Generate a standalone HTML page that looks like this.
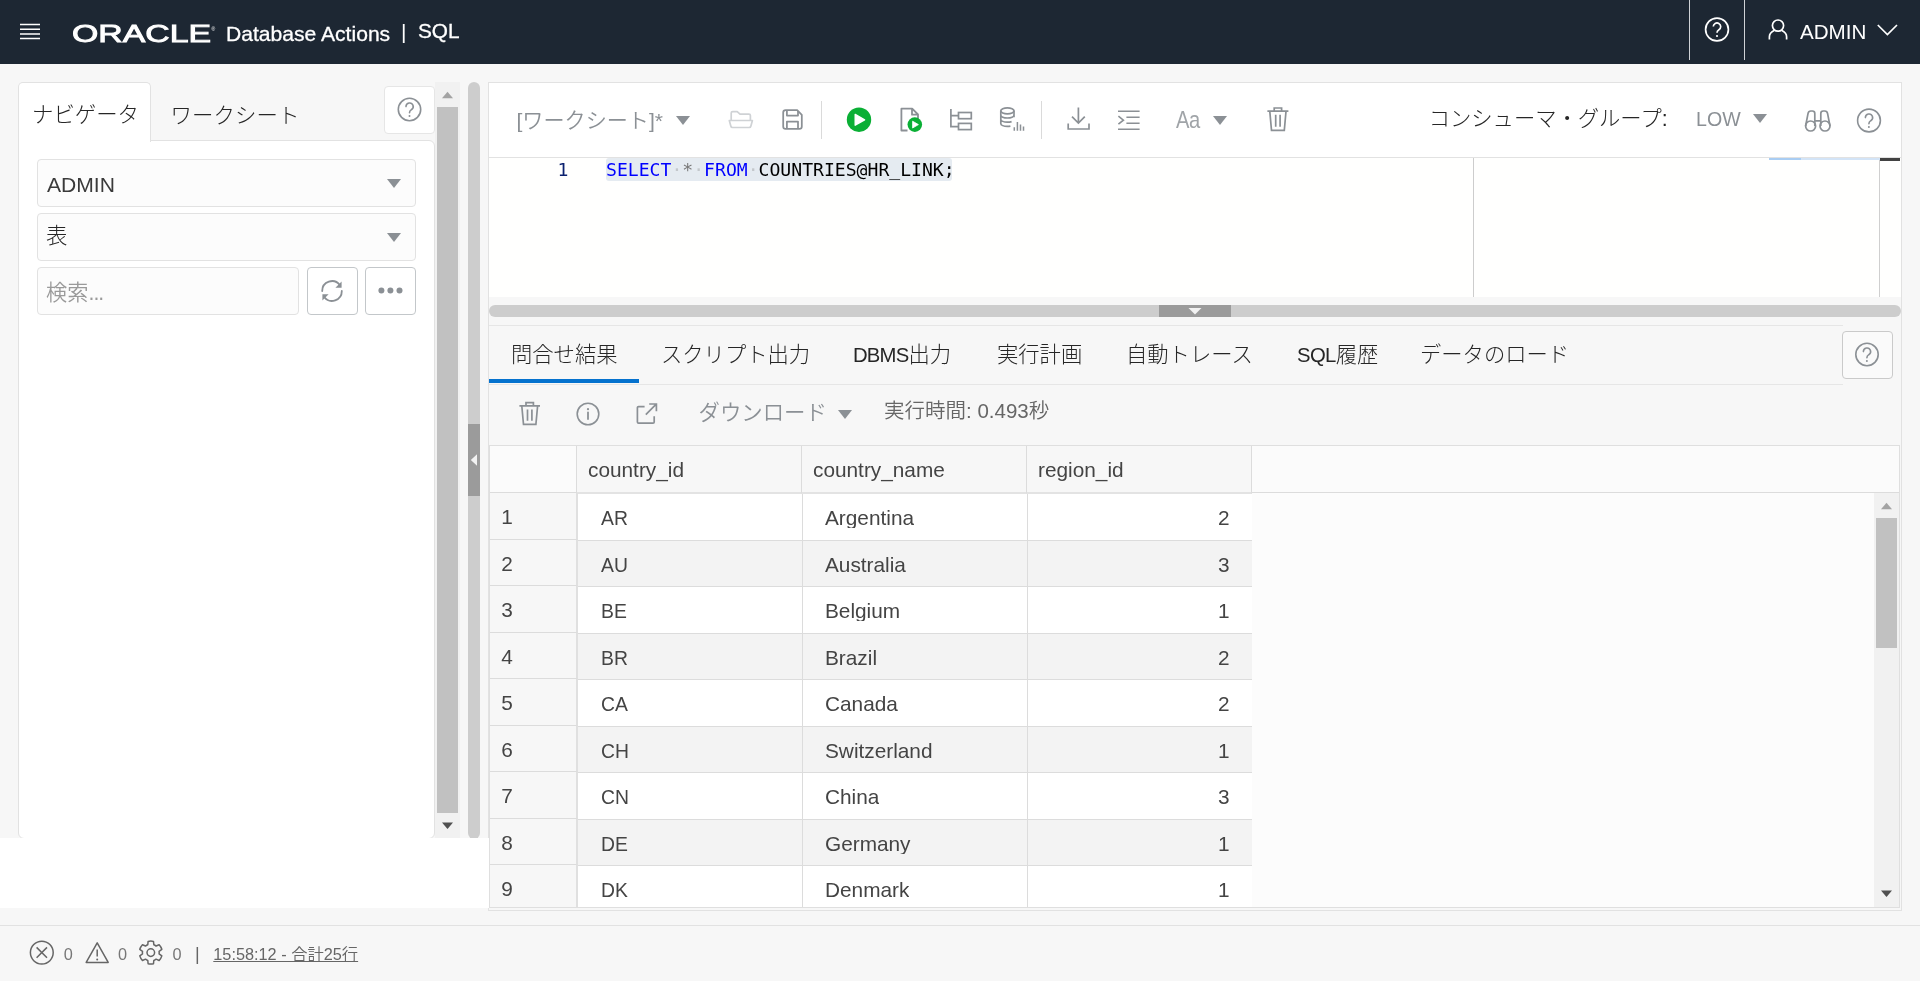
<!DOCTYPE html>
<html lang="ja">
<head>
<meta charset="utf-8">
<title>SQL | Oracle Database Actions</title>
<style>
*{box-sizing:border-box;margin:0;padding:0}
html,body{width:1920px;height:981px;overflow:hidden;background:#f7f7f7}
body{position:relative;will-change:transform;font-family:"Liberation Sans","Noto Sans CJK JP",sans-serif;font-size:20.8px;color:#3a3a3a}
.abs{position:absolute}
svg{position:absolute;overflow:visible}
.ic{fill:none;stroke:#8b9095;stroke-width:1.6;stroke-linecap:round;stroke-linejoin:round}
.t{position:absolute;white-space:nowrap;line-height:1}
.jp{font-weight:350}
.g{color:#8b9095}
.jd{font-weight:300;color:#262626}
#hdr{left:0;top:0;width:1920px;height:64px;background:#1d2733}
#hdr .t{color:#fff}
#navtab{left:18px;top:82px;width:133px;height:60px;background:#fff;border:1px solid #e2e2e2;border-bottom:none;border-radius:5px 5px 0 0}
#navbox{left:18px;top:140px;width:417px;height:699px;background:#fff;border:1px solid #e2e2e2;border-radius:0 6px 6px 6px}
#navcover{left:19px;top:139px;width:131px;height:3px;background:#fff}
.hbtn{background:#fff;border:1px solid #e6e6e6;border-radius:4px}
.inp{background:#fcfcfc;border:1px solid #e2e2e2;border-radius:4px;height:48px}
.btn{background:#fff;border:1px solid #c3c7ca;border-radius:4px;height:48px}
.tri{width:0;height:0;border-left:7px solid transparent;border-right:7px solid transparent;border-top:9px solid #8b9095}
#rp{left:488px;top:82px;width:1414px;height:829px;border:1px solid #e2e2e2;background:#f7f7f7}
#tb{left:489px;top:83px;width:1412px;height:75px;background:#fff;border-bottom:1px solid #e2e2e2}
#ed{left:489px;top:158px;width:1412px;height:139px;background:#fffffe}
.mono{font-family:"DejaVu Sans Mono","Liberation Mono",monospace;font-size:18.1px}
.kw{color:#0000ff}
.ws{color:#c3c7cb}
#grid{left:489px;top:445px;width:1411px;height:463px;border:1px solid #dfdfdf;background:#fcfcfc;overflow:hidden}
.cell{position:absolute;overflow:hidden;white-space:nowrap;line-height:1}
.hc{background:#f7f7f7;border-right:1px solid #dcdcdc;border-bottom:2px solid #e3e3e3;height:48px;top:0}
.rh{background:#f7f7f7;border-right:2px solid #e0e0e0;border-bottom:1px solid #dcdcdc;left:0;width:88px}
.dc{border-right:1px solid #dcdcdc;border-bottom:1px solid #dcdcdc}
.clip{position:absolute;white-space:nowrap;line-height:20px;height:20px;overflow:hidden;color:#444}
</style>
</head>
<body>
<!-- HEADER -->
<div id="hdr" class="abs">
  <svg style="left:20px;top:23px" width="20" height="18" viewBox="0 0 20 18"><path d="M0 1.5h20M0 6.2h20M0 10.9h20M0 15.6h20" stroke="#fff" stroke-width="1.5" fill="none"/></svg>
  <svg style="left:71px;top:23px" width="146" height="22" viewBox="0 0 146 22"><text x="1" y="19.2" fill="#fff" font-family="Liberation Sans, sans-serif" font-size="24.2" textLength="139" lengthAdjust="spacingAndGlyphs" stroke="#fff" stroke-width="0.9">ORACLE</text><text x="140.5" y="8" fill="#fff" font-family="Liberation Sans, sans-serif" font-size="5">®</text></svg>
  <div class="t" style="left:226px;top:23px;font-size:21.1px;-webkit-text-stroke:0.3px #fff">Database Actions</div>
  <div class="t" style="left:401px;top:20.5px;font-size:21px">|</div>
  <div class="t" style="left:418px;top:20.5px;font-size:20.8px;-webkit-text-stroke:0.3px #fff">SQL</div>
  <div class="abs" style="left:1689px;top:0;width:1px;height:60px;background:#cfd2d6"></div>
  <div class="abs" style="left:1744px;top:0;width:1px;height:60px;background:#cfd2d6"></div>
  <svg style="left:1704px;top:17px" width="26" height="26" viewBox="0 0 26 26"><circle cx="13" cy="12.5" r="11.4" fill="none" stroke="#fff" stroke-width="1.7"/><path d="M9.3 9.6a3.7 3.7 0 1 1 5.6 3.2c-1.2.8-1.9 1.4-1.9 3" fill="none" stroke="#fff" stroke-width="1.7"/><circle cx="13" cy="19" r="1.1" fill="#fff"/></svg>
  <svg style="left:1768px;top:19px" width="21" height="22" viewBox="0 0 21 22"><circle cx="10" cy="6.6" r="5.6" fill="none" stroke="#fff" stroke-width="1.7"/><path d="M6.5 11.2C3.5 12.6 1.4 14.6 1.4 17.800V20.6M13.5 11.2C16.5 12.6 18.6 14.6 18.6 17.8V20.6" fill="none" stroke="#fff" stroke-width="1.7"/></svg>
  <div class="t" style="left:1800px;top:21.5px;font-size:20.6px">ADMIN</div>
  <svg style="left:1877px;top:24px" width="21" height="12" viewBox="0 0 21 12"><path d="M0.8 1l9.6 9.6L20 1" fill="none" stroke="#fff" stroke-width="1.7"/></svg>
</div>
<!-- LEFT -->
<div class="abs" style="left:0;top:838px;width:488px;height:70px;background:#fff"></div>
<div id="navbox" class="abs"></div>
<div id="navtab" class="abs"></div>
<div id="navcover" class="abs"></div>
<div class="t jd" style="left:32px;top:105px;font-size:21.4px">ナビゲータ</div>
<div class="t jd" style="left:170.5px;top:106.3px;font-size:21.4px;letter-spacing:0.1px">ワークシート</div>
<div class="abs hbtn" style="left:384px;top:86px;width:51px;height:48px"></div>
<svg style="left:397px;top:97px" width="26" height="26" viewBox="0 0 26 26"><circle cx="12.5" cy="12.5" r="11.2" class="ic"/><path d="M9 9.6a3.6 3.6 0 1 1 5.4 3.1c-1.2.8-1.9 1.4-1.9 3" class="ic"/><circle cx="12.5" cy="19" r="1" fill="#8b9095"/></svg>
<div class="abs inp" style="left:37px;top:159px;width:379px"></div>
<div class="t" style="left:47px;top:174px;font-size:21.1px;color:#3a3a3a">ADMIN</div>
<div class="abs tri" style="left:387px;top:179px"></div>
<div class="abs inp" style="left:37px;top:213px;width:379px"></div>
<div class="t jd" style="left:46px;top:226.3px;font-size:21.4px">表</div>
<div class="abs tri" style="left:387px;top:233px"></div>
<div class="abs inp" style="left:37px;top:267px;width:262px"></div>
<div class="t jp" style="left:46px;top:282.3px;font-size:21.2px;color:#9a9a9a">検索<span style="letter-spacing:-0.9px">...</span></div>
<div class="abs btn" style="left:307px;top:267px;width:51px"></div>
<svg style="left:320px;top:279px" width="24" height="24" viewBox="0 0 24 24"><path d="M2.2 12a9.8 9.8 0 0 1 17.6-6M21.8 12a9.8 9.8 0 0 1-17.6 6" class="ic" style="stroke-width:1.8"/><path d="M21.6 2.6v6.2h-6.2zM2.4 21.4v-6.2h6.2z" fill="#8b9095"/></svg>
<div class="abs btn" style="left:365px;top:267px;width:51px"></div>
<svg style="left:378px;top:287px" width="25" height="7" viewBox="0 0 25 7"><circle cx="3.4" cy="3.4" r="3" fill="#8b9095"/><circle cx="12.4" cy="3.4" r="3" fill="#8b9095"/><circle cx="21.5" cy="3.4" r="3" fill="#8b9095"/></svg>
<!-- nav scrollbar -->
<div class="abs" style="left:435px;top:82px;width:25px;height:756px;background:#f1f1f1"></div>
<div class="abs" style="left:437px;top:107px;width:21px;height:706px;background:#c1c1c1"></div>
<svg style="left:442px;top:91px" width="11" height="8" viewBox="0 0 11 8"><path d="M0 7.2L5.5 0.8 11 7.2z" fill="#a3a3a3"/></svg>
<svg style="left:442px;top:822px" width="11" height="8" viewBox="0 0 11 8"><path d="M0 0.5L5.5 6.9 11 0.5z" fill="#505050"/></svg>
<!-- splitter -->
<div class="abs" style="left:468px;top:82px;width:12px;height:757px;background:#cdcdcd;border-radius:6px"></div>
<div class="abs" style="left:468px;top:424px;width:12px;height:72px;background:#9b9b9b"></div>
<svg style="left:470px;top:454px" width="8" height="12" viewBox="0 0 8 12"><path d="M7 0.3v11.4L0.8 6z" fill="#f2f2f2"/></svg>
<!-- RIGHT PANEL -->
<div id="rp" class="abs"></div>
<div id="tb" class="abs"></div>
<div class="t jp g" style="left:516.5px;top:109.5px;font-size:21.1px">[ワークシート]*</div>
<div class="abs tri" style="left:676px;top:116px"></div>
<!-- open (disabled) -->
<svg style="left:728px;top:109px" width="26" height="21" viewBox="0 0 26 21"><path d="M3.2 11.5V4.1c0-.9.6-1.5 1.5-1.500H9.2L12 5.100H20.900c.9 0 1.500.6 1.500 1.500V11.500M1.300 11.500H24.400L22.900 17c-.2 1-.8 1.500-1.700 1.500H4.500c-.9 0-1.500-.5-1.700-1.500z" fill="none" stroke="#cfd2d5" stroke-width="1.700" stroke-linejoin="round"/></svg>
<!-- save -->
<svg style="left:781px;top:109px" width="23" height="22" viewBox="0 0 23 22"><path d="M4.600 1.200H16.200L20.800 5.800V17.500c0 1.400-1 2.400-2.400 2.400H4.600c-1.400 0-2.400-1-2.400-2.400V3.600c0-1.400 1-2.400 2.400-2.400z" class="ic" style="stroke-width:1.750"/><path d="M5.900 1.200V6.500H17V1.900M5.900 19.900V12.500H17V19.900" class="ic" style="stroke-width:1.750;stroke-linecap:butt"/></svg>
<div class="abs" style="left:821px;top:101px;width:1px;height:38px;background:#dadada"></div>
<!-- run -->
<svg style="left:846px;top:107px" width="26" height="26" viewBox="0 0 26 26"><circle cx="13" cy="12.700" r="12.200" fill="#0aaf35"/><path d="M9.200 7.400v10.800l9.400-5.400z" fill="#fff" stroke="#fff" stroke-width="1.400" stroke-linejoin="round"/></svg>
<!-- run script -->
<svg style="left:900px;top:107px" width="24" height="26" viewBox="0 0 24 26"><path d="M7.500 23.500H1.400V1.700h10.800l5.800 5.800v4.500M12 1.900v5.800h5.800" fill="none" stroke="#8b9095" stroke-width="1.800" stroke-linejoin="round"/><circle cx="14.800" cy="17.600" r="7.300" fill="#0aaf35"/><path d="M12.600 14.200v6.800l5.800-3.400z" fill="#fff" stroke="#fff" stroke-width=".8" stroke-linejoin="round"/></svg>
<!-- explain plan -->
<svg style="left:949px;top:108px" width="24" height="23" viewBox="0 0 24 23"><path d="M1.900 1v17.600h7.600M1.900 7.600h7.600" fill="none" stroke="#8b9095" stroke-width="1.700"/><rect x="9.500" y="4.500" width="12.800" height="6.200" fill="none" stroke="#8b9095" stroke-width="1.700"/><rect x="9.500" y="15.400" width="12.800" height="6.200" fill="none" stroke="#8b9095" stroke-width="1.700"/></svg>
<!-- autotrace -->
<svg style="left:999px;top:106px" width="27" height="26" viewBox="0 0 27 26"><ellipse cx="8.4" cy="4.8" rx="6.600" ry="3" fill="none" stroke="#8b9095" stroke-width="1.700"/><path d="M1.800 4.800v12.600c0 1.700 3 3 6.600 3 1.100 0 2.100-.1 3-.3M15 4.800v6.400M1.800 9c0 1.700 3 3 6.600 3s6.600-1.300 6.600-3M1.800 13.200c0 1.700 3 3 6.600 3 1.600 0 3-.2 4.200-.6" fill="none" stroke="#8b9095" stroke-width="1.700"/><path d="M15.300 24.800v-3.600M18.400 24.800v-8.800M21.500 24.800v-6.200M24.500 24.800v-4.400" stroke="#8b9095" stroke-width="1.500" fill="none"/></svg>
<div class="abs" style="left:1041px;top:101px;width:1px;height:38px;background:#dadada"></div>
<!-- download -->
<svg style="left:1066px;top:106px" width="26" height="25" viewBox="0 0 26 25"><path d="M12.400 1.500v15.500M6 10.600l6.400 6.400 6.400-6.400M2.200 17.400v5.600h20.800v-5.600" fill="none" stroke="#8b9095" stroke-width="1.700"/></svg>
<!-- format -->
<svg style="left:1117px;top:109px" width="24" height="22" viewBox="0 0 24 22"><path d="M1 2.200h21.600M9.400 8.200h13.200M9.400 14.200h13.200M1 20.200h21.600M1.400 7.200l5 4-5 4" fill="none" stroke="#8b9095" stroke-width="1.600"/></svg>
<!-- Aa -->
<div class="t g" style="left:1176.3px;top:108.2px;font-size:24.3px;letter-spacing:-0.5px;transform:scaleX(0.83);transform-origin:0 0;color:#a0a4a8">Aa</div>
<div class="abs tri" style="left:1213px;top:116px"></div>
<!-- trash -->
<svg style="left:1266px;top:106px" width="24" height="26" viewBox="0 0 24 26"><path d="M1.400 5.200h21M8.200 5v-3h7.400v3M3.800 5.400l1.700 19h12.800l1.700-19M9.700 8.800v12M14.100 8.800v12" fill="none" stroke="#8b9095" stroke-width="1.700"/></svg>
<div class="t jd" style="left:1428.7px;top:108.5px;font-size:21.3px">コンシューマ・グループ:</div>
<div class="t g" style="left:1696px;top:109.500px;font-size:19.6px">LOW</div>
<div class="abs tri" style="left:1753px;top:114px"></div>
<!-- binoculars -->
<svg style="left:1804px;top:109px" width="28" height="24" viewBox="0 0 28 24"><circle cx="6.600" cy="17" r="5" fill="none" stroke="#8b9095" stroke-width="1.700"/><circle cx="21" cy="17" r="5" fill="none" stroke="#8b9095" stroke-width="1.700"/><path d="M1.600 17L4 4.600c.3-1.600 1.300-2.600 2.800-2.600h1.600c1.400 0 2.400 1 2.400 2.400v12.600M26 17L23.600 4.600c-.3-1.600-1.300-2.600-2.800-2.600h-1.600c-1.400 0-2.400 1-2.400 2.400v12.600M10.800 11.800h6" fill="none" stroke="#8b9095" stroke-width="1.700"/></svg>
<svg style="left:1856px;top:108px" width="26" height="26" viewBox="0 0 26 26"><circle cx="13" cy="12.500" r="11.400" class="ic"/><path d="M9.400 9.600a3.600 3.600 0 1 1 5.400 3.100c-1.200.8-1.900 1.400-1.900 3" class="ic"/><circle cx="12.900" cy="19" r="1" fill="#8b9095"/></svg>
<!-- EDITOR -->
<div id="ed" class="abs"></div>
<div class="t mono" style="left:557.500px;top:159px;line-height:22px;color:#0b216f">1</div>
<div class="abs" style="left:606px;top:158px;width:346px;height:23px;background:#e5ebf1;border-radius:3px"></div>
<div class="t mono" style="left:606px;top:159px;line-height:22px;color:#000"><span class="kw">SELECT</span><span class="ws">·</span><span style="color:#777">*</span><span class="ws">·</span><span class="kw">FROM</span><span class="ws">·</span>COUNTRIES@HR_LINK;</div>
<div class="abs" style="left:1473px;top:158px;width:1px;height:139px;background:#cdcdcd"></div>
<div class="abs" style="left:1879px;top:158px;width:1px;height:139px;background:#cfcfcf"></div>
<div class="abs" style="left:1769px;top:158px;width:111px;height:2px;background:#d3e4f7"></div>
<div class="abs" style="left:1769px;top:158px;width:32px;height:2px;background:#a9cdf3"></div>
<div class="abs" style="left:1880px;top:158px;width:20px;height:3px;background:#424242"></div>
<!-- horizontal splitter -->
<div class="abs" style="left:489px;top:305px;width:1412px;height:12px;background:#cdcdcd;border-radius:6px"></div>
<div class="abs" style="left:1159px;top:305px;width:72px;height:12px;background:#9b9b9b"></div>
<svg style="left:1188px;top:307px" width="14" height="8" viewBox="0 0 14 8"><path d="M0.500 1h13L7 7.400z" fill="#f2f2f2"/></svg>
<!-- RESULT TABS -->
<div class="abs" style="left:489px;top:325px;width:1354px;height:1px;background:#e6e6e6"></div>
<div class="abs" style="left:489px;top:384px;width:1354px;height:1px;background:#e6e6e6"></div>
<div class="abs" style="left:489px;top:379px;width:150px;height:4px;background:#0572ce"></div>
<div class="t jd" style="left:511px;top:344.5px;font-size:21.3px;">問合せ結果</div>
<div class="t jd" style="left:661px;top:344.5px;font-size:21.3px;">スクリプト出力</div>
<div class="t jd" style="left:853px;top:344.5px;font-size:21.3px;"><span style="letter-spacing:-0.8px;font-size:20.3px">DBMS</span>出力</div>
<div class="t jd" style="left:997px;top:344.5px;font-size:21.3px;">実行計画</div>
<div class="t jd" style="left:1126px;top:344.5px;font-size:21.3px;">自動トレース</div>
<div class="t jd" style="left:1297px;top:344.5px;font-size:21.3px;"><span style="letter-spacing:-0.6px;font-size:20.3px">SQL</span>履歴</div>
<div class="t jd" style="left:1420px;top:344.5px;font-size:21.3px;">データのロード</div>
<div class="abs hbtn" style="left:1842px;top:331px;width:51px;height:48px;background:#fafafa;border-color:#cacaca"></div>
<svg style="left:1854px;top:342px" width="26" height="26" viewBox="0 0 26 26"><circle cx="13" cy="12.500" r="11.200" class="ic"/><path d="M9.400 9.600a3.600 3.600 0 1 1 5.400 3.100c-1.200.8-1.900 1.400-1.900 3" class="ic"/><circle cx="12.900" cy="19" r="1" fill="#8b9095"/></svg>
<!-- result toolbar -->
<svg style="left:518px;top:400px" width="24" height="26" viewBox="0 0 24 26"><path d="M1.400 5.800h20.600M8 5.600v-3h7.400v3M3.800 6l1.700 18.400h12.400l1.700-18.400M9.500 9.400v11.400M13.900 9.400v11.400" fill="none" stroke="#8b9095" stroke-width="1.700"/></svg>
<svg style="left:576px;top:402px" width="24" height="24" viewBox="0 0 24 24"><circle cx="12" cy="12" r="10.800" class="ic"/><path d="M12 10.400v6.600" class="ic" style="stroke-width:1.800"/><circle cx="12" cy="7.200" r="1.100" fill="#8b9095"/></svg>
<svg style="left:635px;top:401px" width="24" height="24" viewBox="0 0 24 24"><path d="M9.600 5.600H3.600c-.7 0-1.200.5-1.200 1.200v14.200c0 .7.500 1.200 1.200 1.200h14.400c.7 0 1.200-.5 1.200-1.200v-5.800M14.200 3h7.200v7.200M21.200 3.200L10.800 13.600" fill="none" stroke="#8b9095" stroke-width="1.700"/></svg>
<div class="t jp g" style="left:698.5px;top:403px;font-size:21.4px">ダウンロード</div>
<div class="abs tri" style="left:838px;top:410px"></div>
<div class="t jp" style="left:884px;top:401px;font-size:20.5px;color:#666">実行時間: 0.493秒</div>
<!-- GRID -->
<div id="grid" class="abs">
<div class="cell" style="left:0;top:0;width:87px;height:47px;background:#fbfbfb;border-right:1px solid #dcdcdc;border-bottom:1px solid #dcdcdc"></div>
<div class="cell hc" style="left:87px;width:225px"><div class="t" style="left:11px;top:14.3px;color:#444">country_id</div></div>
<div class="cell hc" style="left:312px;width:225px"><div class="t" style="left:11px;top:14.3px;color:#444">country_name</div></div>
<div class="cell hc" style="left:537px;width:225px"><div class="t" style="left:11px;top:14.3px;color:#444">region_id</div></div>
<div class="cell" style="left:762px;top:0;width:660px;height:47px;background:#fbfbfb;border-bottom:1px solid #dcdcdc"></div>
<div class="cell rh" style="top:47px;height:47px"></div>
<div class="cell dc" style="left:88px;top:48px;width:225px;height:47px;background:#fff"></div>
<div class="cell dc" style="left:313px;top:48px;width:225px;height:47px;background:#fff"></div>
<div class="cell dc" style="left:538px;top:48px;width:224px;height:47px;background:#fff;border-right:none"></div>
<div class="clip" style="left:11.300000000000011px;top:61.4px">1</div>
<div class="clip" style="left:110.5px;top:62.0px;transform:scaleX(0.93);transform-origin:0 0">AR</div>
<div class="clip" style="left:335px;top:62.0px">Argentina</div>
<div class="clip" style="left:610px;width:129.5px;top:62.0px;text-align:right">2</div>
<div class="cell rh" style="top:94px;height:46px"></div>
<div class="cell dc" style="left:88px;top:95px;width:225px;height:46px;background:#f3f3f3"></div>
<div class="cell dc" style="left:313px;top:95px;width:225px;height:46px;background:#f3f3f3"></div>
<div class="cell dc" style="left:538px;top:95px;width:224px;height:46px;background:#f3f3f3;border-right:none"></div>
<div class="clip" style="left:11.300000000000011px;top:107.9px">2</div>
<div class="clip" style="left:110.5px;top:108.5px;transform:scaleX(0.93);transform-origin:0 0">AU</div>
<div class="clip" style="left:335px;top:108.5px">Australia</div>
<div class="clip" style="left:610px;width:129.5px;top:108.5px;text-align:right">3</div>
<div class="cell rh" style="top:140px;height:47px"></div>
<div class="cell dc" style="left:88px;top:141px;width:225px;height:47px;background:#fff"></div>
<div class="cell dc" style="left:313px;top:141px;width:225px;height:47px;background:#fff"></div>
<div class="cell dc" style="left:538px;top:141px;width:224px;height:47px;background:#fff;border-right:none"></div>
<div class="clip" style="left:11.300000000000011px;top:154.4px">3</div>
<div class="clip" style="left:110.5px;top:155.0px;transform:scaleX(0.93);transform-origin:0 0">BE</div>
<div class="clip" style="left:335px;top:155.0px">Belgium</div>
<div class="clip" style="left:610px;width:129.5px;top:155.0px;text-align:right">1</div>
<div class="cell rh" style="top:187px;height:46px"></div>
<div class="cell dc" style="left:88px;top:188px;width:225px;height:46px;background:#f3f3f3"></div>
<div class="cell dc" style="left:313px;top:188px;width:225px;height:46px;background:#f3f3f3"></div>
<div class="cell dc" style="left:538px;top:188px;width:224px;height:46px;background:#f3f3f3;border-right:none"></div>
<div class="clip" style="left:11.300000000000011px;top:200.9px">4</div>
<div class="clip" style="left:110.5px;top:201.5px;transform:scaleX(0.93);transform-origin:0 0">BR</div>
<div class="clip" style="left:335px;top:201.5px">Brazil</div>
<div class="clip" style="left:610px;width:129.5px;top:201.5px;text-align:right">2</div>
<div class="cell rh" style="top:233px;height:47px"></div>
<div class="cell dc" style="left:88px;top:234px;width:225px;height:47px;background:#fff"></div>
<div class="cell dc" style="left:313px;top:234px;width:225px;height:47px;background:#fff"></div>
<div class="cell dc" style="left:538px;top:234px;width:224px;height:47px;background:#fff;border-right:none"></div>
<div class="clip" style="left:11.300000000000011px;top:247.4px">5</div>
<div class="clip" style="left:110.5px;top:248.0px;transform:scaleX(0.93);transform-origin:0 0">CA</div>
<div class="clip" style="left:335px;top:248.0px">Canada</div>
<div class="clip" style="left:610px;width:129.5px;top:248.0px;text-align:right">2</div>
<div class="cell rh" style="top:280px;height:46px"></div>
<div class="cell dc" style="left:88px;top:281px;width:225px;height:46px;background:#f3f3f3"></div>
<div class="cell dc" style="left:313px;top:281px;width:225px;height:46px;background:#f3f3f3"></div>
<div class="cell dc" style="left:538px;top:281px;width:224px;height:46px;background:#f3f3f3;border-right:none"></div>
<div class="clip" style="left:11.300000000000011px;top:293.9px">6</div>
<div class="clip" style="left:110.5px;top:294.5px;transform:scaleX(0.93);transform-origin:0 0">CH</div>
<div class="clip" style="left:335px;top:294.5px">Switzerland</div>
<div class="clip" style="left:610px;width:129.5px;top:294.5px;text-align:right">1</div>
<div class="cell rh" style="top:326px;height:47px"></div>
<div class="cell dc" style="left:88px;top:327px;width:225px;height:47px;background:#fff"></div>
<div class="cell dc" style="left:313px;top:327px;width:225px;height:47px;background:#fff"></div>
<div class="cell dc" style="left:538px;top:327px;width:224px;height:47px;background:#fff;border-right:none"></div>
<div class="clip" style="left:11.300000000000011px;top:340.4px">7</div>
<div class="clip" style="left:110.5px;top:341.0px;transform:scaleX(0.93);transform-origin:0 0">CN</div>
<div class="clip" style="left:335px;top:341.0px">China</div>
<div class="clip" style="left:610px;width:129.5px;top:341.0px;text-align:right">3</div>
<div class="cell rh" style="top:373px;height:46px"></div>
<div class="cell dc" style="left:88px;top:374px;width:225px;height:46px;background:#f3f3f3"></div>
<div class="cell dc" style="left:313px;top:374px;width:225px;height:46px;background:#f3f3f3"></div>
<div class="cell dc" style="left:538px;top:374px;width:224px;height:46px;background:#f3f3f3;border-right:none"></div>
<div class="clip" style="left:11.300000000000011px;top:386.9px">8</div>
<div class="clip" style="left:110.5px;top:387.5px;transform:scaleX(0.93);transform-origin:0 0">DE</div>
<div class="clip" style="left:335px;top:387.5px">Germany</div>
<div class="clip" style="left:610px;width:129.5px;top:387.5px;text-align:right">1</div>
<div class="cell rh" style="top:419px;height:47px"></div>
<div class="cell dc" style="left:88px;top:420px;width:225px;height:47px;background:#fff"></div>
<div class="cell dc" style="left:313px;top:420px;width:225px;height:47px;background:#fff"></div>
<div class="cell dc" style="left:538px;top:420px;width:224px;height:47px;background:#fff;border-right:none"></div>
<div class="clip" style="left:11.300000000000011px;top:433.4px">9</div>
<div class="clip" style="left:110.5px;top:434.0px;transform:scaleX(0.93);transform-origin:0 0">DK</div>
<div class="clip" style="left:335px;top:434.0px">Denmark</div>
<div class="clip" style="left:610px;width:129.5px;top:434.0px;text-align:right">1</div>
<div class="abs" style="left:1384px;top:47px;width:26px;height:416px;background:#f1f1f1"></div>
<div class="abs" style="left:1386px;top:72px;width:21px;height:130px;background:#c1c1c1"></div>
<svg style="left:1391px;top:56px" width="11" height="8" viewBox="0 0 11 8"><path d="M0 7.2L5.5 0.8 11 7.2z" fill="#a3a3a3"/></svg>
<svg style="left:1391px;top:444px" width="11" height="8" viewBox="0 0 11 8"><path d="M0 0.5L5.5 6.900 11 0.5z" fill="#505050"/></svg>
</div>
<!-- white band + STATUS BAR -->
<div class="abs" style="left:0;top:838px;width:489px;height:70px;background:#fff"></div>
<div class="abs" style="left:0;top:925px;width:1920px;height:1px;background:#e2e2e2"></div>
<svg style="left:29px;top:940px" width="26" height="26" viewBox="0 0 26 26"><circle cx="12.800" cy="12.600" r="11.400" fill="none" stroke="#666" stroke-width="1.500"/><path d="M7.600 7.400l10.400 10.400M18 7.400L7.600 17.800" stroke="#666" stroke-width="1.500" fill="none"/></svg>
<div class="t" style="left:63.8px;top:946.1px;font-size:16.3px;color:#777">0</div>
<svg style="left:85px;top:941px" width="25" height="23" viewBox="0 0 25 23"><path d="M12.200 1.800L23.200 21.400H1.200z" fill="none" stroke="#666" stroke-width="1.500" stroke-linejoin="round"/><path d="M12.200 8.600v7" stroke="#666" stroke-width="1.500"/><circle cx="12.200" cy="18.400" r="1" fill="#666"/></svg>
<div class="t" style="left:118px;top:946.1px;font-size:16.3px;color:#777">0</div>
<svg style="left:138px;top:940px" width="26" height="26" viewBox="0 0 26 26"><g transform="translate(12.800 12.600)" fill="none" stroke="#666" stroke-width="1.500" stroke-linejoin="round"><circle r="3.800"/><path d="M-3.04 -7.83L-2.68 -11.18A11.5 11.5 0 0 1 2.68 -11.18L3.04 -7.83A8.4 8.4 0 0 1 5.26 -6.55L8.35 -7.91A11.5 11.5 0 0 1 11.02 -3.27L8.30 -1.29A8.4 8.4 0 0 1 8.30 1.29L11.02 3.27A11.5 11.5 0 0 1 8.35 7.91L5.26 6.55A8.4 8.4 0 0 1 3.04 7.83L2.68 11.18A11.5 11.5 0 0 1 -2.68 11.18L-3.04 7.83A8.4 8.4 0 0 1 -5.26 6.55L-8.35 7.91A11.5 11.5 0 0 1 -11.02 3.27L-8.30 1.29A8.4 8.4 0 0 1 -8.30 -1.29L-11.02 -3.27A11.5 11.5 0 0 1 -8.35 -7.91L-5.26 -6.55A8.4 8.4 0 0 1 -3.04 -7.83z"/></g></svg>
<div class="t" style="left:172.5px;top:946.1px;font-size:16.3px;color:#777">0</div>
<div class="t" style="left:195px;top:945px;font-size:18px;color:#666">|</div>
<div class="t jp" style="left:213.3px;top:946.1px;font-size:16.3px;color:#666;text-decoration:underline;text-underline-offset:1px">15:58:12 - 合計25行</div>
</body>
</html>
